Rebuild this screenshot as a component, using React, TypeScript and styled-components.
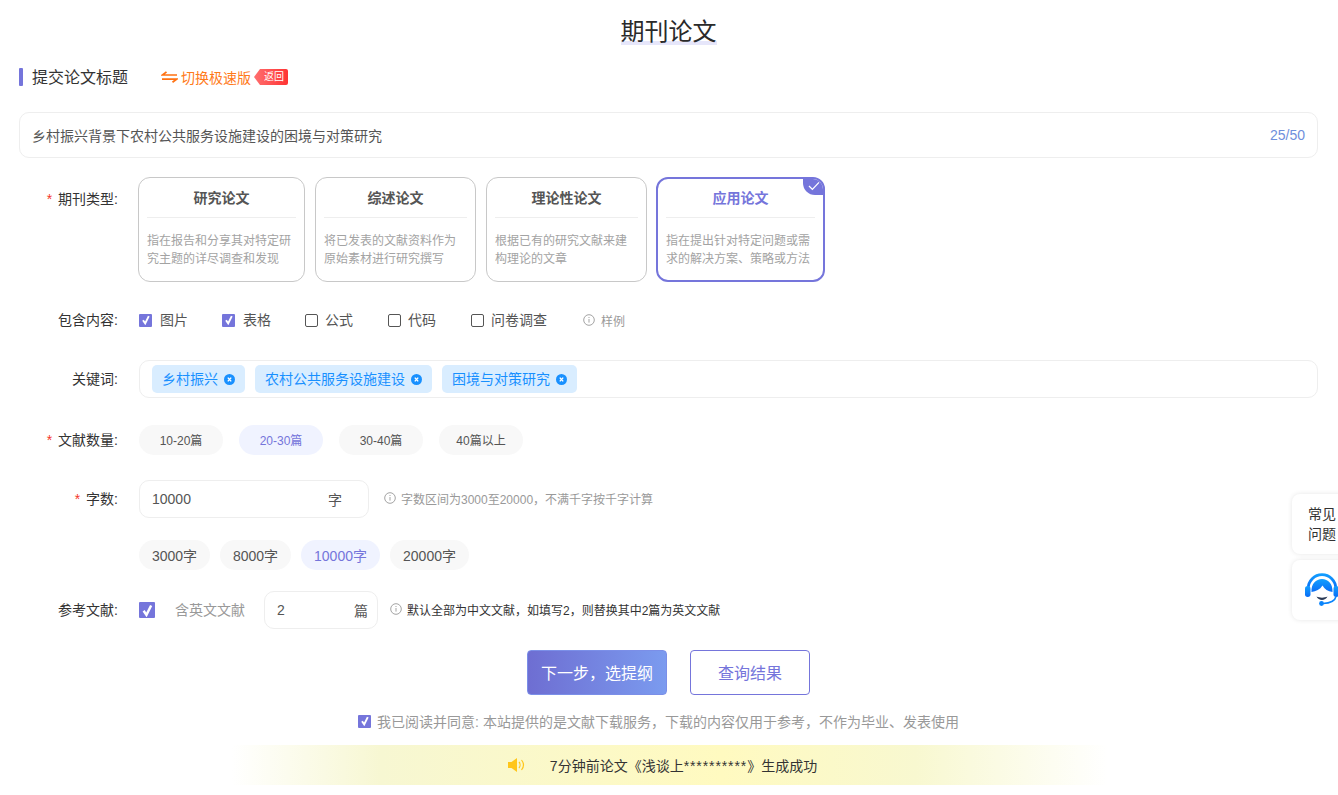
import styled, { createGlobalStyle } from "styled-components";

const purple = "#7575db";

const GlobalStyle = createGlobalStyle`
  html, body {
    margin: 0;
    padding: 0;
    background: #fff;
    overflow: hidden;
  }
  body {
    font-family: "Liberation Sans", "Noto Sans CJK SC", sans-serif;
    color: #333;
  }
  * { box-sizing: border-box; }
`;

const cards = [
  { title: "研究论文", desc: "指在报告和分享其对特定研究主题的详尽调查和发现", width: 167 },
  { title: "综述论文", desc: "将已发表的文献资料作为原始素材进行研究撰写", width: 161 },
  { title: "理论性论文", desc: "根据已有的研究文献来建构理论的文章", width: 161 },
  { title: "应用论文", desc: "指在提出针对特定问题或需求的解决方案、策略或方法", width: 169, active: true },
];

const contents = [
  { name: "图片", checked: true },
  { name: "表格", checked: true },
  { name: "公式" },
  { name: "代码" },
  { name: "问卷调查" },
];

function InfoIcon() {
  return (
    <svg width="12" height="12" viewBox="0 0 12 12" fill="none" stroke="#999" strokeWidth="0.9">
      <circle cx="6" cy="6" r="5.3" />
      <path d="M6 5v3.6M6 3v1" />
    </svg>
  );
}

function CloseDot() {
  return (
    <svg width="11" height="11" viewBox="0 0 11 11">
      <circle cx="5.5" cy="5.5" r="5.5" fill="#1890ff" />
      <path d="M3.8 3.6l3.4 3.8M7.2 3.6l-3.4 3.8" stroke="#fff" strokeWidth="1.4" />
    </svg>
  );
}

function Check({ checked, size = 13 }: { checked?: boolean; size?: number }) {
  return (
    <CheckBox $checked={checked} $size={size}>
      {checked && (
        <svg width={size - 3} height={size - 3} viewBox="0 0 10 10" fill="none" stroke="#fff" strokeWidth="1.9">
          <path d="M2 5.200l2.200 3.200L7.800 1.200" />
        </svg>
      )}
    </CheckBox>
  );
}

function Headset() {
  return (
    <svg width="34" height="33" viewBox="0 0 34 33">
      <defs>
        <linearGradient id="hs" x1="0" y1="0" x2="0" y2="1">
          <stop offset="0" stopColor="#12a0ff" />
          <stop offset="1" stopColor="#0a6cf5" />
        </linearGradient>
      </defs>
      <path d="M1.800 15.500a15.200 15.200 0 0 1 30.400 0h-2.800a12.400 12.400 0 0 0-24.800 0z" fill="url(#hs)" />
      <rect x="0" y="13" width="5.500" height="11" rx="2.700" fill="url(#hs)" />
      <rect x="28.500" y="13" width="5.500" height="11" rx="2.700" fill="url(#hs)" />
      <path d="M6.500 19C6 11 11 6 17 6s11 5 10.500 13C23 18.500 19.500 16 17.500 12.500 15 16.500 11 18.500 6.500 19z" fill="url(#hs)" />
      <path d="M11.500 23.500c3 1.500 8 1.500 11 0-1 2.300-3.300 3.500-5.500 3.500s-4.500-1.200-5.500-3.500z" fill="#2b3a55" />
      <path d="M31 23.500c-1 4.500-6 6.700-13 6.900" fill="none" stroke="#0a84fb" strokeWidth="1.500" />
      <circle cx="16.500" cy="30.500" r="2.400" fill="#0a84fb" />
    </svg>
  );
}

export default function App() {
  return (
    <Page>
      <GlobalStyle />
      <TitleWrap>
        <PageTitle>期刊论文</PageTitle>
      </TitleWrap>

      <SectionHead>
        <SectionBar />
        <SectionName>提交论文标题</SectionName>
        <Switch>
          <svg width="17" height="12" viewBox="0 0 17 12" fill="none" stroke="#ff7212" strokeWidth="1.7">
            <path d="M16 4H1.500L5.500 .8M1 8.200h14.500L11.500 11.200" />
          </svg>
          切换极速版
        </Switch>
        <BackBadge>返回</BackBadge>
      </SectionHead>

      <TitleInput>
        <span>乡村振兴背景下农村公共服务设施建设的困境与对策研究</span>
        <Counter>25/50</Counter>
      </TitleInput>

      <FormRow $top={19} $align="flex-start">
        <Label $required $pad={11}>期刊类型:</Label>
        <Cards>
          {cards.map((c) => (
            <Card key={c.title} $active={c.active} $width={c.width}>
              {c.active && (
                <Corner>
                  <svg width="12" height="10" viewBox="0 0 12 10" fill="none" stroke="#fff" strokeWidth="1.3">
                    <path d="M1 5l3.400 3.400L11 1.400" />
                  </svg>
                </Corner>
              )}
              <CardTitle $active={c.active}>{c.title}</CardTitle>
              <CardDesc>{c.desc}</CardDesc>
            </Card>
          ))}
        </Cards>
      </FormRow>

      <FormRow $top={27}>
        <Label>包含内容:</Label>
        <Checks>
          {contents.map((c) => (
            <CheckItem key={c.name} $checked={c.checked}>
              <Check checked={c.checked} />
              <span>{c.name}</span>
            </CheckItem>
          ))}
          <Sample>
            <InfoIcon />
            样例
          </Sample>
        </Checks>
      </FormRow>

      <FormRow $top={29}>
        <Label>关键词:</Label>
        <TagBox>
          <Tag>乡村振兴<CloseDot /></Tag>
          <Tag>农村公共服务设施建设<CloseDot /></Tag>
          <Tag>困境与对策研究<CloseDot /></Tag>
        </TagBox>
      </FormRow>

      <FormRow $top={27}>
        <Label $required>文献数量:</Label>
        <Chips $gap={16}>
          <Chip $width={84} $small>10-20篇</Chip>
          <Chip $width={84} $small $active>20-30篇</Chip>
          <Chip $width={84} $small>30-40篇</Chip>
          <Chip $width={84} $small>40篇以上</Chip>
        </Chips>
      </FormRow>

      <FormRow $top={25}>
        <Label $required>字数:</Label>
        <NumberBox $width={230}>
          <span>10000</span>
          <WordUnit>字</WordUnit>
        </NumberBox>
        <Hint>
          <InfoIcon />
          字数区间为3000至20000，不满千字按千字计算
        </Hint>
      </FormRow>

      <FormRow $top={22}>
        <Label />
        <Chips $gap={10}>
          <Chip $width={71}>3000字</Chip>
          <Chip $width={71}>8000字</Chip>
          <Chip $width={79} $active>10000字</Chip>
          <Chip $width={79}>20000字</Chip>
        </Chips>
      </FormRow>

      <FormRow $top={21}>
        <Label>参考文献:</Label>
        <Check checked size={16} />
        <EnglishLabel>含英文文献</EnglishLabel>
        <NumberBox $width={114}>
          <span>2</span>
          <PieceUnit>篇</PieceUnit>
        </NumberBox>
        <Hint $dark>
          <InfoIcon />
          默认全部为中文文献，如填写2，则替换其中2篇为英文文献
        </Hint>
      </FormRow>

      <Actions>
        <PrimaryButton>下一步，选提纲</PrimaryButton>
        <GhostButton>查询结果</GhostButton>
      </Actions>

      <Agree>
        <Check checked />
        我已阅读并同意: 本站提供的是文献下载服务，下载的内容仅用于参考，不作为毕业、发表使用
      </Agree>

      <Notice>
        <svg width="17" height="16" viewBox="0 0 17 16">
          <path d="M0 5h3.500L9 1v14l-5.500-4H0z" fill="#ffc61a" />
          <path d="M11 5c1.400 1.600 1.400 4.400 0 6M13.500 3c2.400 3 2.400 7 0 10" fill="none" stroke="#ffc61a" strokeWidth="1.200" />
        </svg>
        <span>
          7分钟前论文《浅谈上<Stars>**********</Stars>》生成成功
        </span>
      </Notice>

      <FloatBox $top={494}>
        常见
        <br />
        问题
      </FloatBox>
      <FloatBox $top={560} $icon>
        <Headset />
      </FloatBox>
    </Page>
  );
}

// Styles
const Page = styled.div`
  width: 1338px;
  height: 795px;
  padding: 0 20px 0 19px;
  overflow: hidden;
  position: relative;
`;

const TitleWrap = styled.div`
  height: 66px;
  display: flex;
  justify-content: center;
  padding-top: 13px;
`;

const PageTitle = styled.h1`
  margin: 0;
  height: 32px;
  font-size: 24px;
  line-height: 37px;
  font-weight: 400;
  color: #2a2a2a;
  background: linear-gradient(#e6e6fa, #e6e6fa) no-repeat left bottom / 100% 4px;
`;

const SectionHead = styled.div`
  height: 22px;
  display: flex;
  align-items: center;
`;

const SectionBar = styled.i`
  width: 4px;
  height: 18px;
  border-radius: 1px;
  background: ${purple};
`;

const SectionName = styled.span`
  margin-left: 9px;
  padding-bottom: 2px;
  font-size: 16px;
  color: #333;
`;

const Switch = styled.span`
  margin-left: 33px;
  padding-bottom: 1px;
  display: flex;
  align-items: center;
  gap: 3px;
  font-size: 14px;
  color: #ff7a1a;
`;

const BackBadge = styled.span`
  margin-left: 3px;
  width: 34px;
  height: 16px;
  padding-left: 6px;
  font-size: 10px;
  line-height: 15px;
  text-align: center;
  color: #fff;
  background: linear-gradient(90deg, #ff6f6f, #ff3333);
  clip-path: polygon(6px 0, 100% 0, 100% 100%, 6px 100%, 0 50%);
  border-radius: 2px;
`;

const TitleInput = styled.div`
  margin-top: 24px;
  height: 46px;
  padding: 0 12px;
  display: flex;
  align-items: center;
  justify-content: space-between;
  border: 1px solid #eee;
  border-radius: 10px;
  font-size: 14px;
  color: #555;
`;

const Counter = styled.span`
  font-size: 14px;
  color: #6f8fdc;
`;

const FormRow = styled.div<{ $top: number; $align?: string }>`
  margin-top: ${(p) => p.$top}px;
  display: flex;
  align-items: ${(p) => p.$align || "center"};
`;

const Label = styled.label<{ $required?: boolean; $pad?: number }>`
  width: 100px;
  flex: none;
  margin-right: 20px;
  padding-top: ${(p) => p.$pad || 0}px;
  padding-bottom: 2px;
  padding-right: 1px;
  text-align: right;
  font-size: 14px;
  color: #333;

  ${(p) =>
    p.$required &&
    `&::before {
      content: "*";
      color: #f5352c;
      margin-right: 6px;
    }`}
`;

const Cards = styled.div`
  margin-left: -1px;
  display: flex;
  gap: 10px;
`;

const Card = styled.div<{ $active?: boolean; $width: number }>`
  position: relative;
  width: ${(p) => p.$width}px;
  height: 105px;
  margin-left: ${(p) => (p.$active ? -1 : 0)}px;
  padding: 0 8px;
  overflow: hidden;
  border: ${(p) => (p.$active ? `2px solid ${purple}` : "1px solid #c8c8c8")};
  border-radius: 12px;
`;

const Corner = styled.span`
  position: absolute;
  top: -2px;
  right: -2px;
  width: 22px;
  height: 18px;
  display: flex;
  align-items: center;
  justify-content: center;
  background: ${purple};
  border-bottom-left-radius: 12px;
`;

const CardTitle = styled.div<{ $active?: boolean }>`
  height: ${(p) => (p.$active ? 39 : 40)}px;
  line-height: ${(p) => (p.$active ? 39 : 40)}px;
  text-align: center;
  font-size: 14px;
  font-weight: 700;
  color: ${(p) => (p.$active ? purple : "#555")};
  border-bottom: 1px solid #eee;
`;

const CardDesc = styled.p`
  margin: 14px 0 0;
  font-size: 12px;
  line-height: 18px;
  color: #a3a3a3;
`;

const Checks = styled.div`
  display: flex;
  align-items: center;
`;

const CheckItem = styled.span<{ $checked?: boolean }>`
  width: 83px;
  display: flex;
  align-items: center;
  gap: ${(p) => (p.$checked ? 8 : 7)}px;
  font-size: 14px;
  color: #555;

  span:last-child {
    padding-bottom: 2px;
  }
`;

const CheckBox = styled.span<{ $checked?: boolean; $size: number }>`
  width: ${(p) => p.$size}px;
  height: ${(p) => p.$size}px;
  flex: none;
  display: inline-flex;
  align-items: center;
  justify-content: center;
  background: ${(p) => (p.$checked ? purple : "#fff")};
  border: ${(p) => (p.$checked ? "none" : "1px solid #555")};
  border-radius: ${(p) => (p.$checked ? "1px" : "2px")};
`;

const Sample = styled.span`
  margin-left: 29px;
  display: flex;
  align-items: center;
  gap: 6px;
  font-size: 12px;
  color: #999;
`;

const TagBox = styled.div`
  flex: 1;
  height: 38px;
  padding: 0 12px;
  display: flex;
  align-items: center;
  gap: 10px;
  border: 1px solid #eee;
  border-radius: 10px;
`;

const Tag = styled.span`
  height: 28px;
  padding: 0 10px 2px;
  display: flex;
  align-items: center;
  gap: 6px;
  font-size: 14px;
  color: #1890ff;
  background: #d9edff;
  border-radius: 5px;

  svg {
    margin-top: 2px;
  }
`;

const Chips = styled.div<{ $gap: number }>`
  display: flex;
  gap: ${(p) => p.$gap}px;
`;

const Chip = styled.span<{ $width: number; $small?: boolean; $active?: boolean }>`
  width: ${(p) => p.$width}px;
  height: 30px;
  padding-bottom: ${(p) => (p.$small ? 2 : 0)}px;
  display: flex;
  align-items: center;
  justify-content: center;
  border-radius: 15px;
  font-size: ${(p) => (p.$small ? 12 : 14)}px;
  color: ${(p) => (p.$active ? purple : "#555")};
  background: ${(p) => (p.$active ? "#f0f3ff" : "#f8f8f8")};
`;

const NumberBox = styled.div<{ $width: number }>`
  width: ${(p) => p.$width}px;
  height: 38px;
  padding: 0 12px;
  flex: none;
  display: flex;
  align-items: center;
  justify-content: space-between;
  border: 1px solid #eee;
  border-radius: 10px;
  font-size: 14px;
  color: #555;
`;

const WordUnit = styled.span`
  margin-right: 14px;
`;

const PieceUnit = styled.span`
  margin-right: -3px;
`;

const Hint = styled.span<{ $dark?: boolean }>`
  margin-left: ${(p) => (p.$dark ? 12 : 15)}px;
  padding-bottom: 2px;
  display: flex;
  align-items: center;
  gap: 5px;
  font-size: 12px;
  color: ${(p) => (p.$dark ? "#333" : "#999")};
`;

const EnglishLabel = styled.span`
  margin: 0 19px 0 20px;
  padding-bottom: 2px;
  font-size: 14px;
  color: #999;
`;

const Actions = styled.div`
  margin-top: 21px;
  display: flex;
  justify-content: center;
  gap: 23px;
`;

const PrimaryButton = styled.button`
  width: 140px;
  height: 45px;
  padding: 0 0 2px;
  border: 1px solid #7b8fe8;
  border-radius: 4px;
  font: inherit;
  font-size: 16px;
  color: #fff;
  background: linear-gradient(90deg, #6e6ed2, #7b9bef);
`;

const GhostButton = styled.button`
  width: 120px;
  height: 45px;
  padding: 0 0 2px;
  border: 1px solid ${purple};
  border-radius: 4px;
  font: inherit;
  font-size: 16px;
  color: ${purple};
  background: #fff;
`;

const Agree = styled.div`
  margin-top: 16px;
  height: 20px;
  padding-right: 20px;
  display: flex;
  align-items: center;
  justify-content: center;
  gap: 6px;
  font-size: 14px;
  color: #999;
`;

const Notice = styled.div`
  margin: 14px 210px 0 213px;
  height: 40px;
  padding-right: 15px;
  display: flex;
  align-items: center;
  justify-content: center;
  gap: 25px;
  font-size: 14px;
  color: #333;
  background: linear-gradient(
    90deg,
    rgba(247, 247, 210, 0),
    #f7f7d2 17%,
    #fffac0 56%,
    #f8f8d0 78%,
    rgba(247, 247, 210, 0)
  );
`;

const Stars = styled.span`
  letter-spacing: 0.9px;
`;

const FloatBox = styled.div<{ $top: number; $icon?: boolean }>`
  position: absolute;
  top: ${(p) => p.$top}px;
  left: 1292px;
  width: 70px;
  height: 60px;
  padding: ${(p) => (p.$icon ? "13px 0 0 13px" : "10px 0 0 16px")};
  font-size: 14px;
  line-height: 20px;
  color: #333;
  background: #fff;
  border-radius: 8px;
  box-shadow: 0 0 5px rgba(0, 0, 0, 0.1);
`;
